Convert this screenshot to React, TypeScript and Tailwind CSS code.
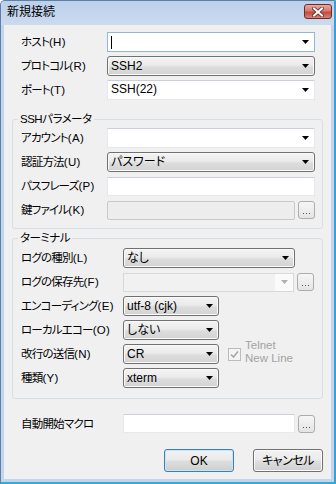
import React from 'react';

const fontClass =
  "font-['Liberation_Sans','Noto_Sans_CJK_JP',sans-serif] [font-feature-settings:'palt']";

// small black drop-down triangle
function Arrow({ color = '#000' }: { color?: string }) {
  return (
    <svg width="7" height="4" viewBox="0 0 7 4" className="shrink-0">
      <path d="M0 0H7L3.5 4Z" fill={color} />
    </svg>
  );
}

// editable combobox (white field)
function EditCombo({ w, value, focused }: { w: string; value?: string; focused?: boolean }) {
  return (
    <div
      className={`${w} h-[20px] bg-white border flex items-center pl-[3px] pr-[5px] ${
        focused ? 'border-[#8fb7e0]' : 'border-[#e3e9ef] border-t-[#c9d0d8]'
      }`}
    >
      {focused && <span className="w-[1px] h-[13px] bg-black" />}
      <span className="flex-1 leading-[18px] -mt-[2px]">{value}</span>
      <Arrow />
    </div>
  );
}

// drop-down list (button look)
function ListCombo({ w, value }: { w: string; value: string }) {
  return (
    <div
      className={`${w} h-[20px] rounded-[3px] border border-[#707070] bg-[linear-gradient(#f3f3f3,#ebebeb_45%,#dddddd_55%,#d2d2d2)] shadow-[inset_0_0_0_1px_#fbfbfb] flex items-center pl-[3px] pr-[5px]`}
    >
      <span className="flex-1 leading-[18px] whitespace-nowrap">{value}</span>
      <Arrow />
    </div>
  );
}

function TextBox({ w, disabled }: { w: string; disabled?: boolean }) {
  return (
    <div
      className={`${w} h-[19px] border ${
        disabled
          ? 'bg-[#ededed] border-[#c9c9c9] rounded-[2px]'
          : 'bg-white border-[#e3e9ef] border-t-[#c9d0d8]'
      }`}
    />
  );
}

function DotsButton() {
  return (
    <div className="w-[17px] h-[18px] ml-[3px] rounded-[3px] border border-[#acacac] bg-[linear-gradient(#f6f6f6,#e4e4e4)] flex items-end justify-center gap-[2px] pb-[4px]">
      <span className="w-[1px] h-[1px] bg-[#5a5a5a]" />
      <span className="w-[1px] h-[1px] bg-[#5a5a5a]" />
      <span className="w-[1px] h-[1px] bg-[#5a5a5a]" />
    </div>
  );
}

// label: japanese part tight, the (X) accelerator part normal spacing
function Label({ text, lw }: { text: string; lw: string }) {
  const i = text.indexOf('(');
  const name = i >= 0 ? text.slice(0, i) : text;
  const key = i >= 0 ? text.slice(i) : '';
  return (
    <span className={`${lw} shrink-0 text-[11.5px] leading-[20px] whitespace-nowrap`}>
      <span className="tracking-[-0.8px]">{name}</span>
      <span className="tracking-[0.3px]">{key}</span>
    </span>
  );
}

function Row({ label, lw, children }: { label: string; lw: string; children: React.ReactNode }) {
  return (
    <div className="flex items-center h-[20px]">
      <Label text={label} lw={lw} />
      {children}
    </div>
  );
}

function Group({ title, children, cls }: { title: string; children: React.ReactNode; cls: string }) {
  return (
    <fieldset className={`mx-[8px] pl-[8px] border border-[#d5dfe5] rounded-[3px] ${cls}`}>
      <legend className="ml-[-3px] px-[2px] text-[11.5px] leading-[12px] tracking-[-0.5px]">{title}</legend>
      <div className="flex flex-col gap-[4px]">{children}</div>
    </fieldset>
  );
}

export default function App() {
  return (
    <div
      className={`${fontClass} text-[12px] text-black w-[336px] h-[484px] flex flex-col bg-[#c3d5ec] rounded-tl-[5px] overflow-hidden border-l border-t border-[#5d7fa8] border-r-2 border-r-[#3a9fd4] border-b-2 border-b-[#36a9da]`}
    >
      {/* title bar */}
      <div className="h-[24px] shrink-0 flex justify-between pl-[6px] pr-[2px] bg-[linear-gradient(#bcd0ea,#cbdbef)]">
        <span className="text-[12px] leading-[23px]">新規接続</span>
        <div className="mt-[3px] w-[28px] h-[15px] rounded-[3px] border border-[#6b2c29] bg-[linear-gradient(#e8aaa0,#d47b6e_45%,#c24b3f_55%,#d9826f)] flex items-center justify-center">
          <svg width="12" height="10" viewBox="0 0 12 10">
            <path d="M2 1.5L10 8.5M10 1.5L2 8.5" stroke="#5a2a28" strokeWidth="3.6" strokeLinecap="square" />
            <path d="M2 1.5L10 8.5M10 1.5L2 8.5" stroke="#fff" strokeWidth="2" strokeLinecap="square" />
          </svg>
        </div>
      </div>

      {/* client area */}
      <div className="flex-1 ml-[3px] mr-[3px] mb-[3px] bg-[#f0f0f0] flex flex-col pt-[7px]">
        <div className="flex flex-col gap-[4px] pl-[17px]">
          <Row label="ホスト(H)" lw="w-[86px]">
            <EditCombo w="w-[208px]" focused />
          </Row>
          <Row label="プロトコル(R)" lw="w-[86px]">
            <ListCombo w="w-[208px]" value="SSH2" />
          </Row>
          <Row label="ポート(T)" lw="w-[86px]">
            <EditCombo w="w-[208px]" value="SSH(22)" />
          </Row>
        </div>

        <Group title="SSHパラメータ" cls="mt-[13px] pt-[3px] pb-[8px]">
          <Row label="アカウント(A)" lw="w-[86px]">
            <EditCombo w="w-[208px]" />
          </Row>
          <Row label="認証方法(U)" lw="w-[86px]">
            <ListCombo w="w-[208px]" value="パスワード" />
          </Row>
          <Row label="パスフレーズ(P)" lw="w-[86px]">
            <TextBox w="w-[208px]" />
          </Row>
          <Row label="鍵ファイル(K)" lw="w-[86px]">
            <TextBox w="w-[188px]" disabled />
            <DotsButton />
          </Row>
        </Group>

        <Group title="ターミナル" cls="mt-[3px] pt-[4px] pb-[10px]">
          <Row label="ログの種別(L)" lw="w-[102px]">
            <ListCombo w="w-[172px]" value="なし" />
          </Row>
          <Row label="ログの保存先(F)" lw="w-[102px]">
            <div className="w-[171px] h-[19px] border border-[#d9d9d9] bg-[#fafafa] flex items-center">
              <div className="flex-1 h-full bg-[#f1f1f1]" />
              <div className="w-[18px] flex justify-center">
                <Arrow color="#b0b0b0" />
              </div>
            </div>
            <DotsButton />
          </Row>
          <Row label="エンコーディング(E)" lw="w-[102px]">
            <ListCombo w="w-[96px]" value="utf-8 (cjk)" />
          </Row>
          <Row label="ローカルエコー(O)" lw="w-[102px]">
            <ListCombo w="w-[96px]" value="しない" />
          </Row>
          <Row label="改行の送信(N)" lw="w-[102px]">
            <ListCombo w="w-[96px]" value="CR" />
            <div className="ml-[9px] w-[13px] h-[13px] border border-[#bcbcbc] bg-[#f4f4f4] flex items-center justify-center">
              <svg width="9" height="9" viewBox="0 0 9 9">
                <path d="M1 4.5L3.5 7L8 1.5" stroke="#a8a8a8" strokeWidth="1.6" fill="none" />
              </svg>
            </div>
            <div className="ml-[4px] mb-[4px] text-[#a3a3a3] text-[11.5px] leading-[13px]">
              <div>Telnet</div>
              <div>New Line</div>
            </div>
          </Row>
          <Row label="種類(Y)" lw="w-[102px]">
            <ListCombo w="w-[96px]" value="xterm" />
          </Row>
        </Group>

        <div className="flex items-center h-[19px] mt-[15px] pl-[17px]">
          <Label text="自動開始マクロ" lw="w-[102px]" />
          <TextBox w="w-[172px]" />
          <DotsButton />
        </div>

        <div className="flex justify-end gap-[19px] mt-[16px] pr-[8px]">
          <button className="w-[70px] h-[23px] rounded-[3px] border border-[#3c7fb1] bg-[linear-gradient(#f2f2f2,#ebebeb_45%,#dddddd_55%,#cfcfcf)] shadow-[inset_0_0_0_1px_#c6e6f8]">
            OK
          </button>
          <button className="w-[70px] h-[23px] rounded-[3px] border border-[#707070] bg-[linear-gradient(#f2f2f2,#ebebeb_45%,#dddddd_55%,#cfcfcf)] shadow-[inset_0_0_0_1px_#fbfbfb] tracking-[-0.5px]">
            キャンセル
          </button>
        </div>
      </div>
    </div>
  );
}
